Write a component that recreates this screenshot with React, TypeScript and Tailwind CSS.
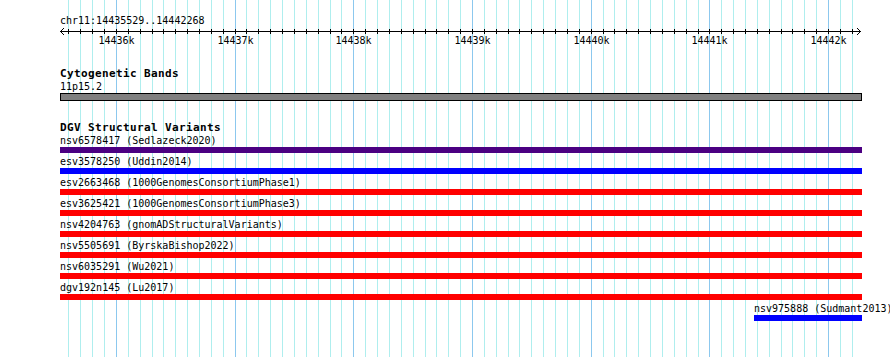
import React from 'react'

const START = 14435529
const END = 14442268
const X0 = 60
const X1 = 862
const PX = 0.1187

const xOf = (bp: number) => X0 + Math.round((bp - START) * PX)

type Variant = { id: string; study: string; color: string; start: number }

const variants: Variant[] = [
  { id: 'nsv6578417', study: 'Sedlazeck2020', color: 'bg-[#4b0082]', start: START },
  { id: 'esv3578250', study: 'Uddin2014', color: 'bg-[#0000ff]', start: START },
  { id: 'esv2663468', study: '1000GenomesConsortiumPhase1', color: 'bg-[#ff0000]', start: START },
  { id: 'esv3625421', study: '1000GenomesConsortiumPhase3', color: 'bg-[#ff0000]', start: START },
  { id: 'nsv4204763', study: 'gnomADStructuralVariants', color: 'bg-[#ff0000]', start: START },
  { id: 'nsv5505691', study: 'ByrskaBishop2022', color: 'bg-[#ff0000]', start: START },
  { id: 'nsv6035291', study: 'Wu2021', color: 'bg-[#ff0000]', start: START },
  { id: 'dgv192n145', study: 'Lu2017', color: 'bg-[#ff0000]', start: START },
  { id: 'nsv975888', study: 'Sudmant2013', color: 'bg-[#0000ff]', start: 14441376 },
]

// every 100 bp inside the view
const ticks: { x: number; major: boolean }[] = []
for (let bp = Math.ceil(START / 100) * 100; bp <= END; bp += 100) {
  ticks.push({ x: xOf(bp), major: bp % 1000 === 0 })
}
const majors = ticks.filter(t => t.major)

function Grid() {
  return (
    <svg className="absolute inset-0" width={890} height={357} shapeRendering="crispEdges">
      {ticks.map(t => (
        <rect key={t.x} x={t.x} y={0} width={1} height={357} fill={t.major ? '#8cc8ee' : '#afeeee'} />
      ))}
    </svg>
  )
}

function Ruler() {
  return (
    <svg className="block h-[7px] w-[802px] overflow-visible" shapeRendering="crispEdges">
      <rect x={0} y={4} width={X1 - X0 - 1} height={1} fill="#000" />
      {ticks.map(t => (
        <rect key={t.x} x={t.x - X0} y={2} width={1} height={5} fill="#000" />
      ))}
      <polyline points="4,1 0.5,4.5 4,8" fill="none" stroke="#000" strokeWidth={1} />
      <polyline points={`${X1 - X0 - 5},1 ${X1 - X0 - 1.5},4.5 ${X1 - X0 - 5},8`} fill="none" stroke="#000" strokeWidth={1} />
    </svg>
  )
}

export default function App() {
  return (
    <div className="relative h-[357px] w-[890px] overflow-hidden bg-white text-black font-['DejaVu_Sans_Mono',monospace]">
      <Grid />
      <div className="relative pl-[60px] pt-[14px] text-[10px]">
        <div className="leading-[13px] whitespace-pre">chr11:14435529..14442268</div>
        <Ruler />
        <div className="relative h-[13px] leading-[13px]">
          {majors.map(t => (
            <span
              key={t.x}
              className="absolute top-0 -translate-x-1/2 whitespace-pre"
              style={{ left: t.x - X0 + 0.5 }}
            >
              {Math.round((START + (t.x - X0) / PX) / 1000)}k
            </span>
          ))}
        </div>

        <div className="mt-[20px] text-[11px] font-bold leading-[13px] tracking-[0.38px]">Cytogenetic Bands</div>
        <div className="leading-[13px]">11p15.2</div>
        <div className="h-[8px] w-[802px] border border-black bg-[#808080]" />

        <div className="mt-[21px] text-[11px] font-bold leading-[12px] tracking-[0.38px]">DGV Structural Variants</div>
        <div className="flex flex-col gap-[2px]">
          {variants.map(v => {
            const left = xOf(v.start) - X0
            return (
              <div key={v.id} style={{ marginLeft: left }}>
                <div className="leading-[13px] whitespace-pre">
                  {v.id} ({v.study})
                </div>
                <div className={`h-[6px] ${v.color}`} style={{ width: X1 - X0 - left }} />
              </div>
            )
          })}
        </div>
      </div>
    </div>
  )
}
